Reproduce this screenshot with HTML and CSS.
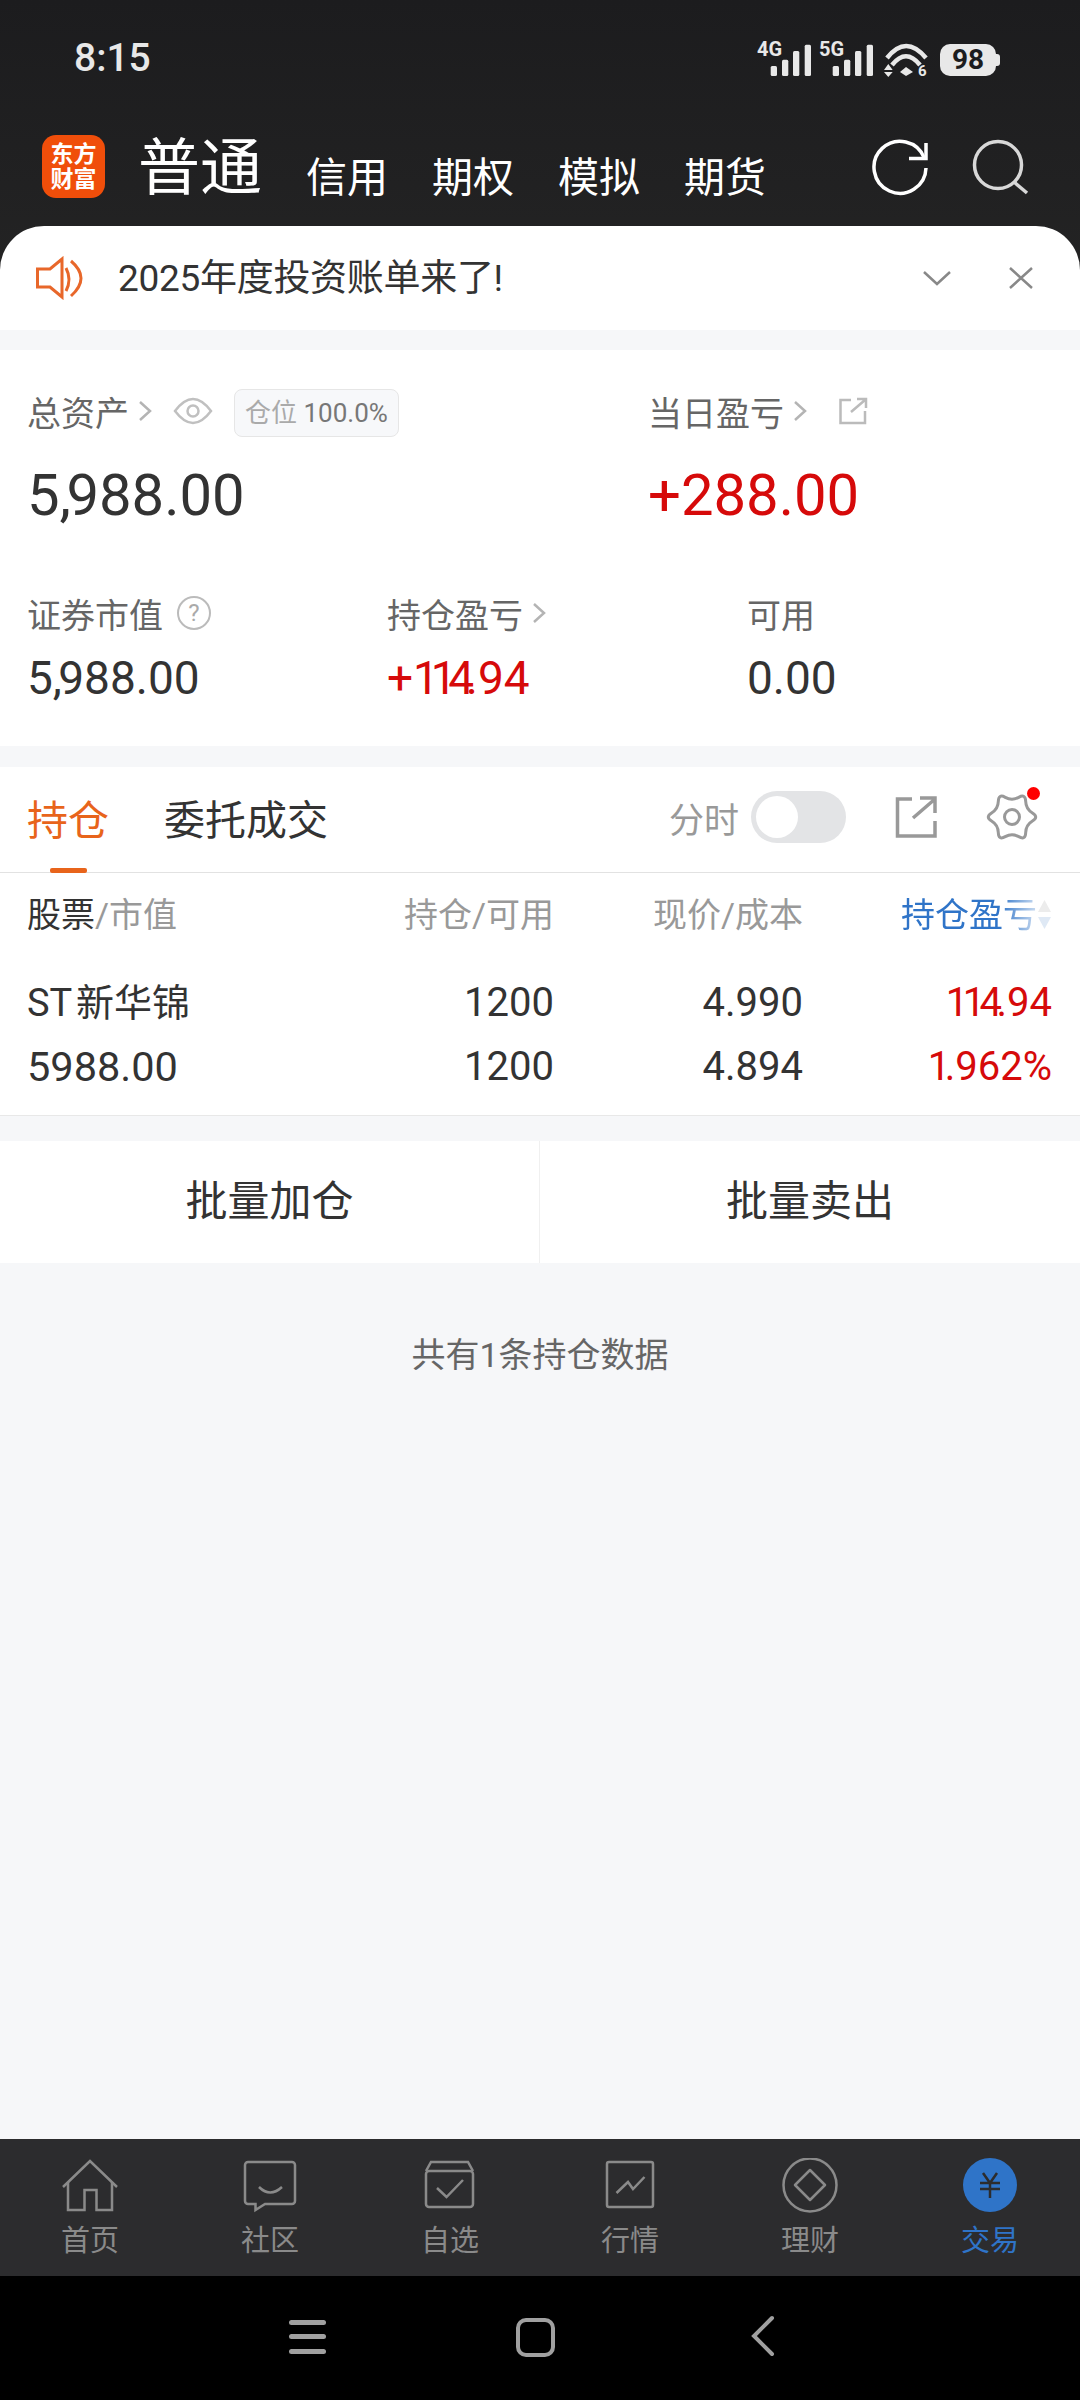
FILE: index.html
```html
<!DOCTYPE html>
<html lang="zh-CN">
<head>
    <meta charset="UTF-8">
    <meta name="viewport" content="width=device-width, initial-scale=1.0">
    <title>交易</title>
    <link rel="stylesheet" href="styles.css">
</head>
<body>
    <div class="app">
        <div class="header">
            <div class="status-bar">
                <div class="time">8:15</div>
                <div class="status-icons">
                    <svg width="54" height="41" viewBox="0 -6 54 41"><text x="0" y="15" class="net-text">4G</text><rect x="13.7" y="25" width="6.3" height="10" rx="1.5"/><rect x="25" y="18.7" width="6.3" height="16.3" rx="1.5"/><rect x="36" y="10" width="6.3" height="25" rx="1.5"/><rect x="47.7" y="3.7" width="6.3" height="31.3" rx="1.5"/></svg>
                    <svg width="54" height="41" viewBox="0 -6 54 41"><text x="0" y="15" class="net-text">5G</text><rect x="13.7" y="25" width="6.3" height="10" rx="1.5"/><rect x="25" y="18.7" width="6.3" height="16.3" rx="1.5"/><rect x="36" y="10" width="6.3" height="25" rx="1.5"/><rect x="47.7" y="3.7" width="6.3" height="31.3" rx="1.5"/></svg>
                    <svg class="wifi" width="45" height="42" viewBox="0 0 45 42"><path d="M3 17Q22 -7 42 17M8 24Q22 6.5 36 24" fill="none" stroke="#e8e8e8" stroke-width="4.5"/><path d="M16 31L22 26L29 31L22 35Z"/><path d="M4.3 23L8.7 29H0ZM0 31H8.7L4.3 36Z"/><text x="34" y="35" class="wifi-text">6</text></svg>
                    <div class="battery">98</div>
                </div>
            </div>
            <div class="top-nav">
                <div class="logo"><span>东方</span><span>财富</span></div>
                <div class="account-main">普通</div>
                <div class="account-tabs">
                    <span>信用</span>
                    <span>期权</span>
                    <span>模拟</span>
                    <span>期货</span>
                </div>
                <div class="top-actions">
                    <svg width="60" height="60" viewBox="0 0 60 60" fill="none" stroke="#fff" stroke-width="3.5"><path d="M53.3 20A26 26 0 1 0 55 30"/><path d="M55 5V20.5H38"/></svg>
                    <svg width="64" height="60" viewBox="0 0 64 60" fill="none" stroke="#d8d8d8" stroke-width="3.5"><circle cx="30" cy="27" r="23.5"/><path d="M46 44L59 55"/></svg>
                </div>
            </div>
            <div class="notice">
                <svg width="50" height="44" viewBox="0 0 50 44" fill="none" stroke="#e8672a" stroke-width="3"><path d="M2.5 13H15L27 3V41L15 31H2.5Z"/><path d="M31 12Q37 23.5 31 35"/><path d="M36 5Q56 22 36 40"/></svg>
                <div class="notice-text">2025年度投资账单来了!</div>
                <svg class="notice-down" width="30" height="16" viewBox="0 0 30 16" fill="none" stroke="#888" stroke-width="2.5"><path d="M2 2L15 14L28 2"/></svg>
                <svg class="notice-close" width="28" height="24" viewBox="0 0 28 24" fill="none" stroke="#888" stroke-width="2.5"><path d="M3 2L25 22M25 2L3 22"/></svg>
            </div>
        </div>

        <div class="stats">
            <div class="stats-top">
                <div>
                    <div class="stat-label">
                        总资产
                        <svg class="chev" width="14" height="22" viewBox="0 0 14 22"><path d="M2 2L12 11L2 20"/></svg>
                        <svg class="eye" width="40" height="28" viewBox="0 0 40 28" fill="none" stroke="#c0c0c0" stroke-width="2.5"><path d="M2 14Q20 -10 38 14Q20 38 2 14Z"/><circle cx="20" cy="14" r="5.5"/></svg>
                        <span class="chip"><span class="chip-name">仓位</span> 100.0%</span>
                    </div>
                    <div class="stat-big">5<span class="thin">,</span>988.00</div>
                </div>
                <div>
                    <div class="stat-label">
                        当日盈亏
                        <svg class="chev" width="14" height="22" viewBox="0 0 14 22"><path d="M2 2L12 11L2 20"/></svg>
                        <svg class="share-small" width="30" height="28" viewBox="0 0 30 28" fill="none" stroke="#bbb" stroke-width="2.5"><path d="M13 3H2.5V26H27V14"/><path d="M13 15L27 3M19 2H28V11"/></svg>
                    </div>
                    <div class="stat-big red">+288.00</div>
                </div>
            </div>
            <div class="stats-bottom">
                <div>
                    <div class="stat-label">证券市值 <span class="help">?</span></div>
                    <div class="stat-mid">5<span class="thin">,</span>988.00</div>
                </div>
                <div>
                    <div class="stat-label">
                        持仓盈亏
                        <svg class="chev" width="14" height="22" viewBox="0 0 14 22"><path d="M2 2L12 11L2 20"/></svg>
                    </div>
                    <div class="stat-mid red">+<span class="one">114</span>.94</div>
                </div>
                <div>
                    <div class="stat-label">可用</div>
                    <div class="stat-mid">0.00</div>
                </div>
            </div>
        </div>

        <div class="holdings">
            <div class="tabs">
                <div class="tab active">持仓</div>
                <div class="tab">委托成交</div>
                <div class="tab-tools">
                    <span class="tool-label">分时</span>
                    <div class="toggle"><div class="knob"></div></div>
                    <svg class="tool-share" width="44" height="44" viewBox="0 0 44 44" fill="none" stroke="#999" stroke-width="3.5"><path d="M18 4H3.5V41H41V26"/><path d="M19 23L41 4M26 3H41V18"/></svg>
                    <div class="gear">
                        <svg width="52" height="52" viewBox="-26 -26 52 52" fill="none" stroke="#999" stroke-width="3"><path d="M20.43 -4Q27 0 20.43 4Q13.86 8 13.68 15.69Q13.5 23.38 6.75 19.69Q0 16 -6.75 19.69Q-13.5 23.38 -13.68 15.69Q-13.86 8 -20.43 4Q-27 0 -20.43 -4Q-13.86 -8 -13.68 -15.69Q-13.5 -23.38 -6.75 -19.69Q0 -16 6.75 -19.69Q13.5 -23.38 13.68 -15.69Q13.86 -8 20.43 -4Z"/><circle r="7.5"/></svg>
                        <span class="dot"></span>
                    </div>
                </div>
            </div>
            <div class="table">
                <div class="th"><span class="th-dark">股票</span>/市值</div>
                <div class="th right">持仓/可用</div>
                <div class="th right">现价/成本</div>
                <div class="th right sort">
                    <span class="sort-label">持仓盈亏</span>
                    <svg width="15" height="36" viewBox="0 0 15 36"><path d="M7.5 3L14 15H1Z" fill="#ececec"/><path d="M1 20H14L7.5 32Z" fill="#dfe9f5"/></svg>
                </div>
                <div class="td name first">ST 新华锦</div>
                <div class="td num right first">1200</div>
                <div class="td num right first">4.990</div>
                <div class="td num right red first"><span class="one">114</span>.94</div>
                <div class="td amount">5988.00</div>
                <div class="td num right">1200</div>
                <div class="td num right">4.894</div>
                <div class="td num right red"><span class="one">1</span>.962%</div>
            </div>
        </div>

        <div class="batch">
            <div class="batch-btn">批量加仓</div>
            <div class="batch-btn">批量卖出</div>
        </div>
        <div class="summary">共有1条持仓数据</div>

        <div class="bottom-nav">
            <div class="nav-item">
                <svg width="60" height="56" viewBox="0 0 60 56" fill="none" stroke="#8a8a8a" stroke-width="2.5"><path d="M3 29L30 3L57 29"/><path d="M8 24V52H24.5V32H36.5V52H52V24"/></svg>
                <span>首页</span>
            </div>
            <div class="nav-item">
                <svg width="60" height="56" viewBox="0 0 60 56" fill="none" stroke="#8a8a8a" stroke-width="2.5"><path d="M8 4H52A3 3 0 0 1 55 7V43A3 3 0 0 1 52 46H25L15.5 52V46H8A3 3 0 0 1 5 43V7A3 3 0 0 1 8 4Z"/><path d="M19 29Q30 40 42 29"/></svg>
                <span>社区</span>
            </div>
            <div class="nav-item">
                <svg width="60" height="56" viewBox="0 0 60 56" fill="none" stroke="#8a8a8a" stroke-width="2.5"><rect x="6" y="13" width="47" height="36" rx="3"/><path d="M6 13L11 4H48L53 13"/><path d="M17 30L26.5 39L43 22"/></svg>
                <span>自选</span>
            </div>
            <div class="nav-item">
                <svg width="60" height="56" viewBox="0 0 60 56" fill="none" stroke="#8a8a8a" stroke-width="2.5"><rect x="7" y="4" width="46" height="45" rx="2"/><path d="M16.5 35L28 24L33 31L44.5 19"/></svg>
                <span>行情</span>
            </div>
            <div class="nav-item">
                <svg width="60" height="56" viewBox="0 0 60 56" fill="none" stroke="#8a8a8a" stroke-width="2.5"><circle cx="30" cy="27" r="26.5"/><path d="M30 12L45 27L30 42L15 27Z" stroke-linejoin="round"/></svg>
                <span>理财</span>
            </div>
            <div class="nav-item active">
                <svg width="60" height="56" viewBox="0 0 60 56"><circle cx="30" cy="27" r="27" fill="#2f74c8"/><path d="M23 15L30 25L37 15M20 25H40M20 31H40M30 25V40" fill="none" stroke="#2c2c2e" stroke-width="2.5"/></svg>
                <span>交易</span>
            </div>
        </div>

        <div class="system-nav">
            <svg width="60" height="44" viewBox="0 0 60 44" fill="#a0a0a0"><rect x="11" y="5" width="37" height="5" rx="2.5"/><rect x="11" y="19" width="37" height="5" rx="2.5"/><rect x="11" y="34" width="37" height="5" rx="2.5"/></svg>
            <svg width="60" height="44" viewBox="0 0 60 44" fill="none" stroke="#a0a0a0" stroke-width="4"><rect x="11" y="5" width="35" height="35" rx="8"/></svg>
            <svg width="60" height="44" viewBox="0 0 60 44" fill="none" stroke="#a0a0a0" stroke-width="4" stroke-linecap="round"><path d="M40 3L22 21L40 39"/></svg>
        </div>
    </div>
</body>
</html>
```

FILE: styles.css
```css
body {
    margin: 0;
    background-color: #f6f7f9;
    font-family: Roboto, "Noto Sans CJK SC", sans-serif;
    color: #333;
}
.app {
    display: flex;
    flex-direction: column;
    width: 1080px;
    height: 2400px;
    overflow: hidden;
}
.red {
    color: #d60a0a;
}
/* the reference's comma and 1 are narrower than Roboto's */
.thin {
    letter-spacing: -0.08em;
}
.one {
    letter-spacing: -0.08em;
}

/* Dark header */
.header {
    background: linear-gradient(#1c1c1e, #252525);
}
.status-bar {
    display: flex;
    align-items: center;
    justify-content: space-between;
    height: 116px;
    padding: 0 80px 0 74px;
}
.time {
    color: #e8e8e8;
    font-size: 39px;
    font-weight: 500;
}
.status-icons {
    display: flex;
    align-items: flex-end;
    gap: 8px;
    margin-top: -5px;
    fill: #e8e8e8;
}
.net-text {
    font-size: 20px;
    font-weight: 700;
}
.wifi-text {
    font-size: 15px;
    font-weight: 700;
}
.wifi {
    margin-left: 3px;
    margin-bottom: -7px;
}
.battery {
    position: relative;
    width: 56px;
    height: 32px;
    margin-left: 3px;
    margin-right: 4px;
    border-radius: 10px;
    background-color: #e8e8e8;
    color: #1c1c1e;
    font-size: 28px;
    font-weight: 700;
    line-height: 32px;
    text-align: center;
}
.battery::after {
    content: "";
    position: absolute;
    top: 10px;
    right: -4px;
    width: 4px;
    height: 12px;
    border-radius: 0 3px 3px 0;
    background-color: #e8e8e8;
}
.top-nav {
    display: flex;
    align-items: flex-start;
    height: 110px;
    padding: 19px 48px 0 42px;
    box-sizing: border-box;
    color: #fff;
}
.logo {
    display: flex;
    flex-direction: column;
    align-items: center;
    justify-content: center;
    width: 63px;
    height: 63px;
    border-radius: 14px;
    background-color: #f04e0a;
    font-size: 23px;
    font-weight: 700;
    line-height: 25px;
}
.account-main {
    margin-left: 33px;
    margin-top: -1px;
    font-size: 62px;
    line-height: 70px;
}
.account-tabs {
    display: flex;
    gap: 44px;
    margin-left: 44px;
    margin-top: 18px;
    font-size: 41px;
    line-height: 50px;
}
.top-actions {
    display: flex;
    gap: 37px;
    margin-left: auto;
    margin-top: 3px;
}
.notice {
    display: flex;
    align-items: center;
    height: 104px;
    padding: 0 45px 0 35px;
    box-sizing: border-box;
    border-radius: 44px 44px 0 0;
    background-color: #fff;
}
.notice-text {
    margin-left: 33px;
    margin-top: -6px;
    font-size: 37px;
    letter-spacing: -0.3px;
}
.notice-down {
    margin-left: auto;
    transform: translateX(2px);
}
.notice-close {
    margin-left: 57px;
}

/* Asset summary */
.stats {
    margin-top: 20px;
    padding: 39px 0 40px 27px;
    background-color: #fff;
}
.stats-top {
    display: grid;
    grid-template-columns: 621px 1fr;
}
.stats-bottom {
    display: grid;
    grid-template-columns: 360px 360px 1fr;
    margin-top: 61px;
}
.stat-label {
    display: flex;
    align-items: center;
    height: 44px;
    color: #666;
    font-size: 34px;
}
.chev {
    margin-left: 9px;
    fill: none;
    stroke: #b4b4b4;
    stroke-width: 2.5;
}
.eye {
    margin-left: 21px;
}
.share-small {
    margin-left: 31px;
}
.chip {
    margin-top: 3px;
    margin-left: 21px;
    padding: 0 10px;
    height: 46px;
    border: 1px solid #e6e6e6;
    border-radius: 8px;
    background-color: #f7f8fa;
    color: #777;
    font-size: 26px;
    line-height: 46px;
}
.chip-name {
    color: #aaa;
}
.help {
    display: inline-block;
    width: 30px;
    height: 30px;
    margin-left: 14px;
    border: 2.5px solid #bbb;
    border-radius: 50%;
    color: #aaa;
    font-size: 24px;
    line-height: 30px;
    text-align: center;
}
.stat-big {
    margin-top: 27px;
    font-size: 58px;
    line-height: 70px;
}
.stat-mid {
    margin-top: 15px;
    font-size: 46px;
    line-height: 56px;
}
.stat-mid .one {
    letter-spacing: -0.18em;
}

/* Holdings */
.holdings {
    margin-top: 21px;
    padding-bottom: 16px;
    border-bottom: 1px solid #e8e8e8;
    background-color: #fff;
}
.tabs {
    position: relative;
    display: flex;
    align-items: center;
    height: 106px;
    padding: 0 42px 5px 27px;
    box-sizing: border-box;
    border-bottom: 1px solid #e2e2e2;
}
.tab {
    margin-right: 55px;
    font-size: 41px;
}
.tab.active {
    color: #e8641b;
}
.tab.active::after {
    content: "";
    position: absolute;
    left: 50px;
    bottom: -1px;
    width: 37px;
    height: 5px;
    border-radius: 2px;
    background-color: #e8641b;
}
.tab-tools {
    display: flex;
    align-items: center;
    margin-left: auto;
}
.tool-label {
    color: #999;
    font-size: 35px;
}
.toggle {
    width: 95px;
    height: 52px;
    margin-left: 12px;
    padding: 5px;
    box-sizing: border-box;
    border-radius: 26px;
    background-color: #e3e4e6;
}
.knob {
    width: 42px;
    height: 42px;
    border-radius: 50%;
    background-color: #fff;
}
.tool-share {
    margin-left: 48px;
}
.gear {
    position: relative;
    display: flex;
    margin-left: 48px;
}
.dot {
    position: absolute;
    top: -4px;
    right: -2px;
    width: 13px;
    height: 13px;
    border-radius: 50%;
    background-color: #f00;
}
.table {
    display: grid;
    grid-template-columns: 277px 250px 249px 249px;
    padding: 20px 28px 0 27px;
}
.th {
    color: #999;
    font-size: 34px;
    line-height: 44px;
}
.th-dark {
    color: #333;
}
.right {
    text-align: right;
}
.sort {
    display: flex;
    align-items: center;
    justify-content: flex-end;
}
.sort-label {
    color: #2f74c8;
    -webkit-mask-image: linear-gradient(to right, #000 72%, rgba(0, 0, 0, 0.25) 100%);
    mask-image: linear-gradient(to right, #000 72%, rgba(0, 0, 0, 0.25) 100%);
}
.td {
    height: 64px;
    line-height: 64px;
}
.td.first {
    margin-top: 34px;
}
.name {
    font-size: 38px;
    word-spacing: -5px;
}
.num {
    font-size: 40px;
}
.num .one {
    letter-spacing: -0.14em;
}
.amount {
    font-size: 41.5px;
}

/* Batch buttons */
.batch {
    display: grid;
    grid-template-columns: 1fr 1fr;
    height: 122px;
    margin-top: 25px;
    background-color: #fff;
}
.batch-btn {
    font-size: 42px;
    line-height: 122px;
    text-align: center;
}
.batch-btn:first-child {
    border-right: 1px solid #f0f0f0;
}
.summary {
    flex: 1;
    padding-top: 68px;
    color: #666;
    font-size: 34px;
    line-height: 48px;
    text-align: center;
}

/* Bottom navigation */
.bottom-nav {
    display: grid;
    grid-template-columns: repeat(6, 1fr);
    height: 137px;
    padding-top: 19px;
    box-sizing: border-box;
    background-color: #2c2c2e;
}
.nav-item {
    display: flex;
    flex-direction: column;
    align-items: center;
    gap: 9px;
    color: #8a8a8a;
    font-size: 29px;
    line-height: 36px;
}
.nav-item.active {
    color: #2f74c8;
}
.system-nav {
    display: grid;
    grid-template-columns: 229px 225px 60px;
    height: 124px;
    padding: 39px 0 0 278px;
    box-sizing: border-box;
    background-color: #000;
}
```
